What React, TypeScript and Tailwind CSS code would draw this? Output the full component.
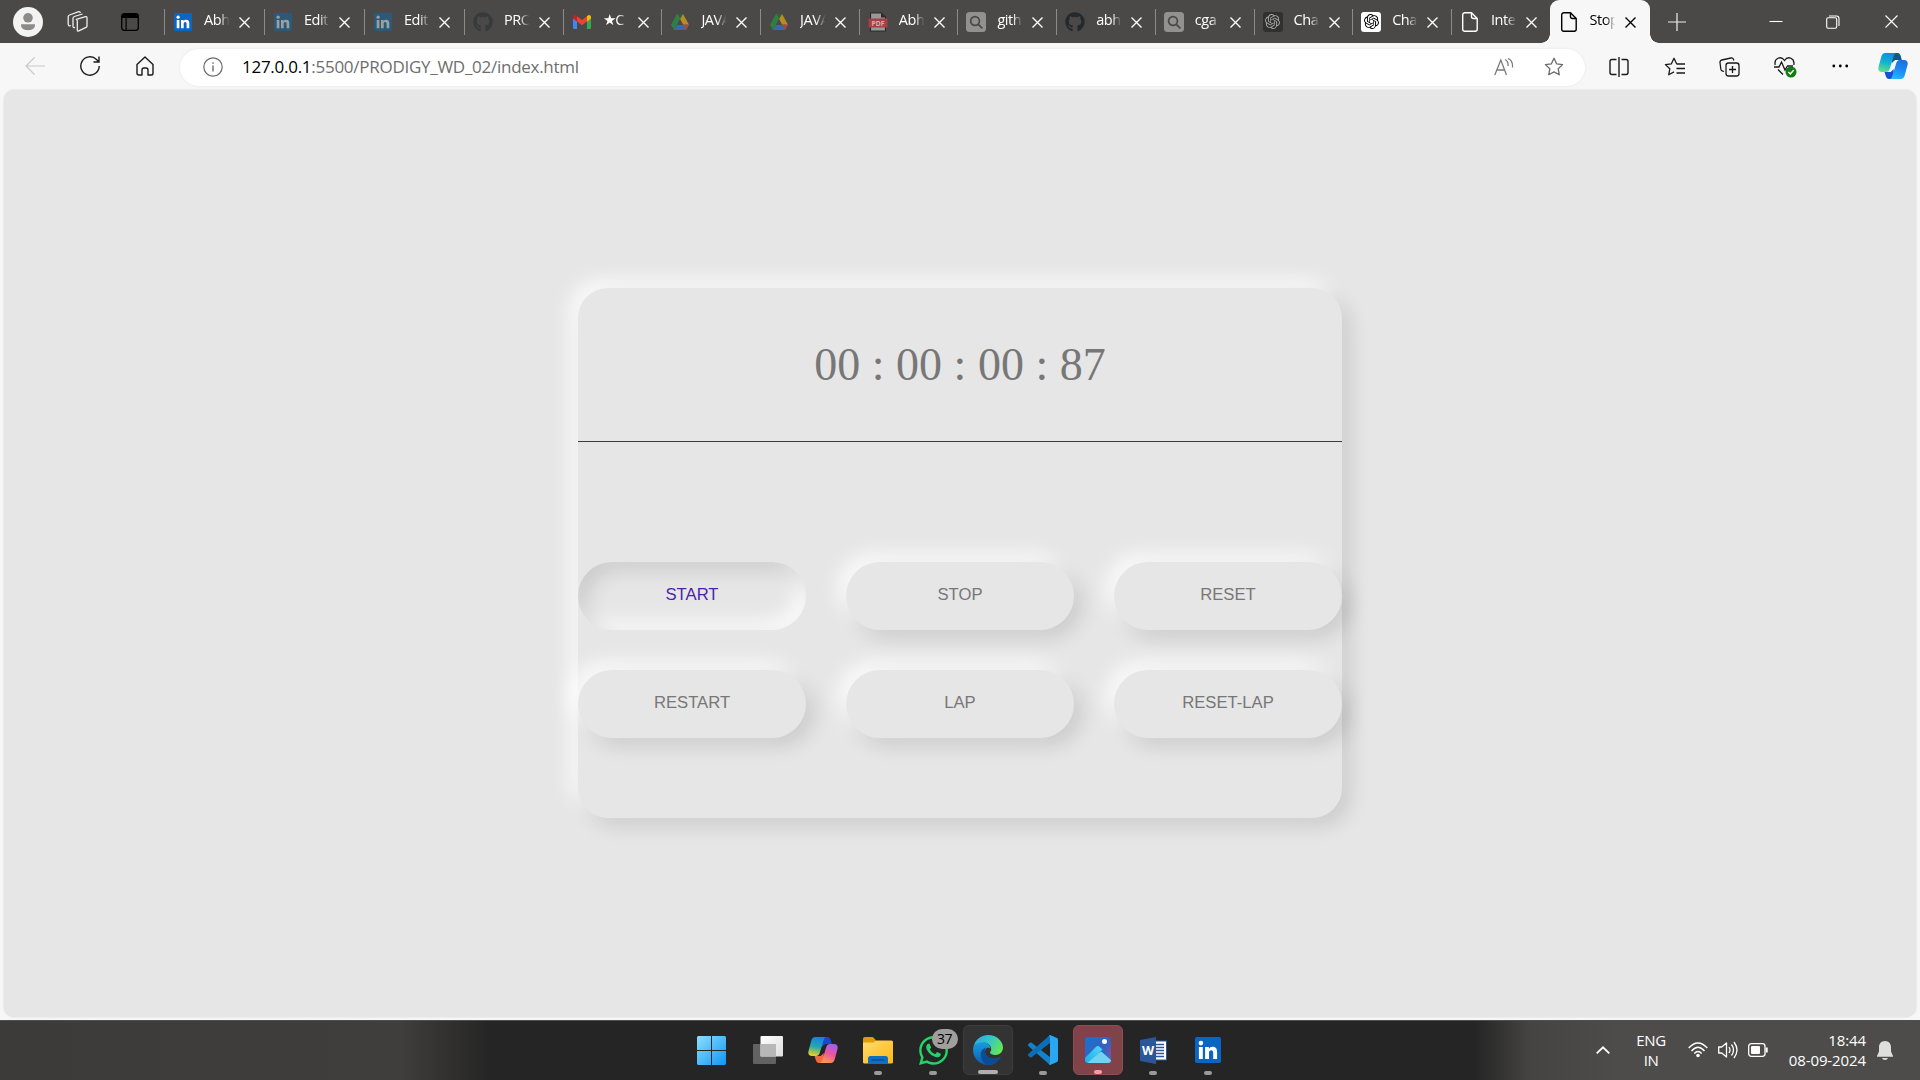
import React from "react";
import { FaGithub, FaWhatsapp } from "react-icons/fa";
import { SiOpenai } from "react-icons/si";

type IconProps = { className?: string };

const LinkedIn = ({ className, dim }: IconProps & { dim?: boolean }) => (
  <svg viewBox="0 0 18 18" className={className}>
    <rect width="18" height="18" rx="1.2" fill={dim ? "#2b5a78" : "#0a66c2"} />
    <g fill={dim ? "#9c9fa1" : "#fff"}>
      <circle cx="4.1" cy="4.2" r="1.6" />
      <path d="M2.7 7h2.7v8.2H2.7zM7 7h2.6v1.2C10.1 7.3 11 6.8 12.200 6.800c2.500 0 3.100 1.600 3.100 3.900v4.500h-2.700v-4c0-1.100-.1-2.100-1.400-2.100s-1.500 1-1.500 2.100v4H7z" />
    </g>
  </svg>
);

const Gmail = () => (
  <svg viewBox="0 0 18 14" className="h-[14px] w-[18px]">
    <path d="M0 3v9.500Q0 14 1.300 14H4V6z" fill="#4285f4" />
    <path d="M18 3v9.500Q18 14 16.700 14H14V6z" fill="#34a853" />
    <path d="M4 1.200 9 5l5-3.800v5.300L9 10.300 4 6.500z" fill="#ea4335" />
    <path d="M0 2C0 .2 2.200-.6 3.500.7L4 1.200v5.300L0 3.500z" fill="#c5221f" />
    <path d="M18 2c0-1.800-2.200-2.600-3.500-1.300l-.5.500v5.300l4-3z" fill="#fbbc04" />
  </svg>
);

const Drive = () => (
  <svg viewBox="0 0 18 16" className="h-[16px] w-[18px]">
    <path d="M6 0h6L9 5.300 3 16 0 10.700z" fill="#2f7f45" />
    <path d="M6 0h6l6 10.700h-6z" fill="#b98c22" />
    <path d="M6 0h6L9 5.300z" fill="#27653a" />
    <path d="M6 10.700h12L15 16H3z" fill="#3d66ab" />
    <path d="M12 10.700h6L15 16z" fill="#b0453b" />
    <path d="M9 5.300 12 10.700H6z" fill="#4a4947" />
  </svg>
);

const Pdf = () => (
  <svg viewBox="0 0 20 20" className="size-5">
    <path d="M2.500 1h11L17.500 5v14h-15z" fill="#999" stroke="#2b2b2b" strokeWidth="1.200" />
    <path d="M13 1v4.500h4.500z" fill="#2b2b2b" />
    <rect x="0.500" y="6.500" width="19" height="9" fill="#a93f41" />
    <text x="10" y="13.600" textAnchor="middle" fontSize="6.800" fontWeight="700" fill="#c9b5b5" fontFamily="Open Sans, sans-serif">PDF</text>
  </svg>
);

const SearchTile = () => (
  <svg viewBox="0 0 20 20" className="size-5">
    <rect width="20" height="20" rx="3.500" fill="#92918f" />
    <circle cx="9" cy="9" r="4.400" fill="none" stroke="#4a4947" strokeWidth="1.700" />
    <path d="m12.300 12.300 3.500 3.500" stroke="#4a4947" strokeWidth="1.800" strokeLinecap="round" />
  </svg>
);

const Chat = ({ dark }: { dark?: boolean }) => (
  <span className={dark ? "flex size-5 items-center justify-center rounded-[3px] bg-[#30302f] text-[#a5a5a4]" : "flex size-5 items-center justify-center rounded-[3px] bg-white text-black"}>
    <SiOpenai className="size-[15px]" />
  </span>
);

const FileIcon = () => (
  <svg viewBox="0 0 16 20" className="h-5 w-4" fill="none" stroke="currentColor" strokeWidth="1.400" strokeLinejoin="round">
    <path d="M2.700.8H9.500L15.200 6.500v10.800a2 2 0 0 1-2 2H2.700a2 2 0 0 1-2-2V2.800a2 2 0 0 1 2-2z" />
    <path d="M9.500.8v3.700a2 2 0 0 0 2 2h3.700" />
  </svg>
);

const Close = ({ className = "size-[11px]" }: IconProps) => (
  <svg viewBox="0 0 11 11" className={className} stroke="currentColor" strokeWidth="1.400">
    <path d="m.5.5 10 10M10.500.5l-10 10" />
  </svg>
);

const tabs: { title: string; icon: React.ReactNode; wide?: boolean }[] = [
  { title: "Abh", icon: <LinkedIn className="size-[18px]" />, wide: true },
  { title: "Edit", icon: <LinkedIn dim className="size-[18px]" />, wide: true },
  { title: "Edit", icon: <LinkedIn dim className="size-[18px]" />, wide: true },
  { title: "PRO", icon: <FaGithub className="size-5 text-[#363a3d]" /> },
  { title: "★C", icon: <Gmail /> },
  { title: "JAVA", icon: <Drive /> },
  { title: "JAVA", icon: <Drive /> },
  { title: "Abh", icon: <Pdf /> },
  { title: "gith", icon: <SearchTile /> },
  { title: "abh", icon: <FaGithub className="size-5 text-[#24292e]" /> },
  { title: "cga", icon: <SearchTile /> },
  { title: "Cha", icon: <Chat dark /> },
  { title: "Cha", icon: <Chat /> },
  { title: "Inte", icon: <FileIcon /> },
];

const TabBody = ({ title, icon }: { title: string; icon: React.ReactNode }) => (
  <>
    <span className="flex w-5 shrink-0 justify-center">{icon}</span>
    <span className="ml-[11px] w-[26px] shrink-0 overflow-hidden whitespace-nowrap pb-[3px] text-[14.500px] leading-5 tracking-[-0.450px] [mask-image:linear-gradient(to_right,black_60%,transparent_98%)]">
      {title}
    </span>
    <Close className="ml-[9px] mt-px size-[11px] shrink-0" />
  </>
);

const TabBar = () => (
  <header className="flex h-[43px] bg-[#4a4947] text-white">
    <div className="flex w-[164px] shrink-0 items-center">
      <svg viewBox="0 0 30 30" className="ml-[13px] size-[30px]">
        <circle cx="15" cy="15" r="15" fill="#f3f3f3" />
        <circle cx="15" cy="10.800" r="4.800" fill="#8c8b8a" />
        <path d="M8 17.300h14v.8c0 3.500-3.200 5.200-7 5.200s-7-1.700-7-5.200z" fill="#8c8b8a" />
      </svg>
      <svg viewBox="0 0 21 21" className="ml-[24px] size-[21px]" fill="none" stroke="#eee" strokeWidth="1.300" strokeLinejoin="round">
        <path d="M9.300 8.300 18.500 5.700q1.500-.3 1.500 1.200v8q0 1-1 1.500l-7.200 3.500q-1.500.5-1.500-1V10q0-1.300-1-1.700z" />
        <path d="M8 16.500q-2 .5-2-1.200V7.500q0-1.500 1.300-2L15.500 3" />
        <path d="M4 14.500q-2.800 1-2.800-1.500V6q0-1.500 1.300-2L11 .8q1.500-.5 2.500 1" />
      </svg>
      <svg viewBox="0 0 18 18" className="ml-[33px] size-[18px]">
        <rect x=".7" y=".7" width="16.600" height="16.600" rx="2.500" fill="none" stroke="#000" strokeWidth="1.300" />
        <path d="M.7 5V3Q.7.700 3 .7h12Q17.300.700 17.300 3v2zM4.500 5h1.200v12H4.500z" />
      </svg>
    </div>
    {tabs.map((t, i) => (
      <div key={i} className={t.wide ? "flex h-[43px] w-[100px] shrink-0 items-center" : "flex h-[43px] w-[98.700px] shrink-0 items-center"}>
        <span className="mr-[8px] h-[26px] w-px shrink-0 bg-[#8c8b8a]" />
        <TabBody title={t.title} icon={t.icon} />
      </div>
    ))}
    <div className="relative flex h-[43px] w-[100px] shrink-0 items-center rounded-t-[9px] bg-[#f7f7f7] pl-[9px] text-black">
      <span className="absolute bottom-0 left-[-9px] size-[9px] bg-[radial-gradient(circle_at_0_0,#4a4947_8.500px,#f7f7f7_9px)]" />
      <TabBody title="Stop" icon={<FileIcon />} />
      <span className="absolute bottom-0 right-[-9px] size-[9px] bg-[radial-gradient(circle_at_100%_0,#4a4947_8.500px,#f7f7f7_9px)]" />
    </div>
    <div className="flex flex-1 items-center">
      <svg viewBox="0 0 18 18" className="ml-[18px] size-[18px]" stroke="#eee" strokeWidth="1.200"><path d="M9 0v18M0 9h18" /></svg>
      <svg viewBox="0 0 14 14" className="ml-[83px] mt-px size-[14px]" stroke="#fff" strokeWidth="1.100"><path d="M.5 6.500h13" /></svg>
      <svg viewBox="0 0 14 14" className="ml-[43px] size-[14px]" fill="none" stroke="#fff" strokeWidth="1.100">
        <rect x=".7" y="2.700" width="10" height="10.500" rx="1.500" /><path d="M3 1h7.500q2.500 0 2.500 2.500V11" />
      </svg>
      <svg viewBox="0 0 13 13" className="ml-[45px] size-[13px]" stroke="#fff" strokeWidth="1.100"><path d="m.5.5 12 12M12.500.5l-12 12" /></svg>
    </div>
  </header>
);

const Copilot = ({ vivid, className }: { vivid?: boolean; className?: string }) => {
  const id = vivid ? "cv" : "cb";
  return (
    <svg viewBox="0 0 30 28" className={className}>
      <defs>
        <linearGradient id={id + "1"} x1="0.500" y1="0" x2="0.300" y2="1">
          <stop offset="0" stopColor={vivid ? "#1a7fe0" : "#0b8fe0"} />
          <stop offset=".5" stopColor={vivid ? "#20a8b0" : "#12b5cf"} />
          <stop offset="1" stopColor={vivid ? "#f2d21c" : "#63e08c"} />
        </linearGradient>
        <linearGradient id={id + "2"} x1="0.700" y1="0" x2="0.300" y2="1">
          <stop offset="0" stopColor={vivid ? "#a25bf0" : "#1b6fdc"} />
          <stop offset=".5" stopColor={vivid ? "#f0569a" : "#1a8cf5"} />
          <stop offset="1" stopColor={vivid ? "#ff9a4a" : "#2cb5ff"} />
        </linearGradient>
      </defs>
      <path d="M13 1h6.500c2 0 2.800 1.500 3.300 3.200l1 3.800h-6l-4 3z" fill={vivid ? "#1b48c8" : "#10578a"} />
      <path d="M16.500 27H11c-2 0-2.800-1.500-3.300-3.200L6.500 20h6l3-3z" fill={vivid ? "#f4693c" : "#1550d6"} />
      <path d="M7.500 1h11c-1.500 0-2.300 1.200-2.800 3l-4 13c-.6 2-1.700 3-3.700 3H4c-3 0-4.200-2-3.500-5l2.700-10C3.800 2.500 5.200 1 7.500 1z" fill={`url(#${id}1)`} />
      <path d="M22.500 27h-11c1.500 0 2.300-1.200 2.800-3l4-13c.6-2 1.700-3 3.700-3h4c3 0 4.200 2 3.500 5l-2.700 10c-.6 2.500-2 4-4.300 4z" fill={`url(#${id}2)`} />
      <path d="M18.800 8q-3.300.3-4.300 3.500l-1.800 5.700q-.8 2.600-1.800 2.800 3.300-.2 4.300-3.300l1.900-5.900Q17.800 8.500 18.800 8z" fill={vivid ? "#252525" : "#fff"} />
    </svg>
  );
};

const star = "M10 1.300l2.600 5.500 6 .8-4.400 4.200 1.100 6L10 14.900l-5.300 2.900 1.100-6L1.400 7.600l6-.8z";

const AddressBar = () => (
  <div className="flex h-[46px] items-center bg-[#f7f7f7]">
    <svg viewBox="0 0 20 18" className="ml-[25px] h-[18px] w-5" fill="none" stroke="#c9c9c9" strokeWidth="1.200"><path d="M20 9H1M9.500.5 1 9l8.500 8.500" /></svg>
    <svg viewBox="0 0 20 20" className="ml-[35px] size-5" fill="none" stroke="#1a1a1a" strokeWidth="1.400"><path d="M19.200 10A9.200 9.200 0 1 1 16.500 3.500L19 6M19 .5V6h-5.500" /></svg>
    <svg viewBox="0 0 18 20" className="ml-[36px] h-5 w-[18px]" fill="none" stroke="#1a1a1a" strokeWidth="1.400" strokeLinejoin="round"><path d="M1 8.500 9 1l8 7.500v8.700q0 1.800-1.800 1.800H12v-5q0-2-2-2H8q-2 0-2 2v5H2.800Q1 19 1 17.200z" /></svg>
    <div className="ml-[26px] mt-[2px] flex h-[37px] w-[1405px] items-center rounded-full bg-white shadow-[0_0_3px_rgba(0,0,0,0.080)]">
      <svg viewBox="0 0 20 20" className="ml-[23px] size-5" fill="none" stroke="#6b6b6b" strokeWidth="1.200"><circle cx="10" cy="10" r="9.200" /><path d="M10 8.500V14.500M10 5.300v1.500" strokeWidth="1.400" /></svg>
      <p className="ml-[19px] flex-1 whitespace-nowrap text-[17px] tracking-[-0.270px] text-[#6e6e6e]"><span className="text-black">127.0.0.1</span>:5500/PRODIGY_WD_02/index.html</p>
      <svg viewBox="0 0 20 18" className="h-[18px] w-5" fill="none" stroke="#7a7a7a" strokeWidth="1.300"><path d="M.8 17 6.800 2 12.500 17M2.800 12h8M11 1.500q3.500 1.500 3 6.500M14 .5q5 2 4.500 9" /></svg>
      <svg viewBox="0 0 20 20" className="ml-[30px] mr-[21px] size-5" fill="none" stroke="#6b6b6b" strokeWidth="1.300" strokeLinejoin="round"><path d={star} /></svg>
    </div>
    <svg viewBox="0 0 20 20" className="ml-[24px] mt-px size-5" fill="none" stroke="#1a1a1a" strokeWidth="1.400"><path d="M7.500 2.500H3Q1 2.500 1 4.500v11q0 2 2 2h4.500M12.500 2.500H17q2 0 2 2v11q0 2-2 2h-4.500M10 0v20" /></svg>
    <svg viewBox="0 0 21 20" className="ml-[35px] mt-[2px] h-5 w-[21px]" fill="none" stroke="#1a1a1a" strokeWidth="1.300" strokeLinejoin="round"><path d="M10 14.900 4.700 17.800l1.100-6L1.400 7.600l6-.8L10 1.300l2.600 5.500M12.500 7H21M12.500 11.500H21M12.500 16H21" /></svg>
    <svg viewBox="0 0 21 20" className="ml-[34px] mt-[2px] h-5 w-[21px]" fill="none" stroke="#1a1a1a" strokeWidth="1.300"><rect x="7" y="6" width="13" height="13" rx="2.500" /><path d="M13.500 9v7M10 12.500h7M5 14.500 3 13.800Q2 13.500 1.800 12L1 5.500Q.8 3.500 2.800 3L12 1q2-.3 2.500 1.500l.3 1" /></svg>
    <svg viewBox="0 0 23 21" className="ml-[34px] mt-[3px] h-[21px] w-[23px]" fill="none" stroke="#1a1a1a" strokeWidth="1.300"><path d="M1.200 8C-.2 1 7-1.500 10.500 3.500 14-1.500 21 1 19.800 8M0 10h5l2.500-5 3.500 8 2.500-4H19M4 12.500l5 5" /><circle cx="17" cy="15" r="5.500" fill="#107c10" stroke="none" /><path d="m14.300 15 2 2 3.500-4" stroke="#fff" strokeWidth="1.500" /></svg>
    <svg viewBox="0 0 16 4" className="ml-[35px] h-1 w-4"><circle cx="1.800" cy="2" r="1.400" /><circle cx="8.300" cy="2" r="1.400" /><circle cx="14.700" cy="2" r="1.400" /></svg>
    <Copilot className="ml-[30px] h-[28px] w-[30px]" />
  </div>
);

const raised = "shadow-[8px_8px_20px_rgba(0,0,0,0.120),-8px_-8px_20px_rgba(255,255,255,0.850)]";
const buttons = ["START", "STOP", "RESET", "RESTART", "LAP", "RESET-LAP"];

const Stopwatch = () => (
  <main className="flex h-[931px] flex-col bg-[#f7f7f7] px-1 pb-[3px] pt-px">
    <div className="flex flex-1 items-start justify-center rounded-[10px] bg-[#e6e6e6] pt-[198px] shadow-[0_0_2px_rgba(0,0,0,0.150)]">
      <section className={"h-[530px] w-[764px] rounded-[30px] bg-[#e6e6e6] " + raised}>
        <div className="flex h-[153px] justify-center pt-[50px] font-['Liberation_Serif',serif] text-[46px] leading-[53px] text-[#777]">00 : 00 : 00 : 87</div>
        <div className="h-px bg-[#3c3c3c]" />
        <div className="mt-[120px] grid grid-cols-3 gap-10">
          {buttons.map((b, i) => (
            <button key={b} className={i === 0
              ? "h-[68px] rounded-full bg-[#e6e6e6] pb-[2px] font-['Liberation_Sans',sans-serif] text-[16.670px] leading-5 text-[#4d1fae] shadow-[inset_8px_8px_20px_rgba(0,0,0,0.120),inset_-8px_-8px_20px_rgba(255,255,255,0.850)]"
              : "h-[68px] rounded-full bg-[#e6e6e6] pb-[2px] font-['Liberation_Sans',sans-serif] text-[16.670px] leading-5 text-[#777] " + raised}>
              {b}
            </button>
          ))}
        </div>
      </section>
    </div>
  </main>
);

const Windows = () => (
  <svg viewBox="0 0 29 29" className="size-[29px]">
    <defs><linearGradient id="win" gradientUnits="userSpaceOnUse" x1="0" y1="0" x2="29" y2="29"><stop stopColor="#8ae0fd" /><stop offset="1" stopColor="#1195f5" /></linearGradient></defs>
    <path d="M1 0h13v14H0V1zM15 0h13l1 1v13H15zM0 15h14v14H1l-1-1zM15 15h14v13l-1 1H15z" fill="url(#win)" />
  </svg>
);
const TaskView = () => (
  <svg viewBox="0 0 30 28" className="h-[28px] w-[30px]">
    <defs><linearGradient id="tv" x1="0" y1="0" x2="1" y2="1"><stop stopColor="#fff" /><stop offset="1" stopColor="#ddd" /></linearGradient></defs>
    <rect x="0" y="8" width="23" height="20" rx="1" fill="#626262" />
    <rect x="7.500" y="0" width="22.500" height="20.500" rx="1" fill="url(#tv)" />
    <path d="M7.500 8H23v12.500H7.500z" fill="#b7b7b7" />
  </svg>
);
const Folder = () => (
  <svg viewBox="0 0 30 27" className="h-[27px] w-[30px]">
    <defs><linearGradient id="fo" x1="0" y1="0" x2="1" y2="1"><stop stopColor="#ffdb70" /><stop offset="1" stopColor="#fdb913" /></linearGradient></defs>
    <path d="M0 2Q0 0 2 0h7q1 0 2 1l2 2.500V8H0z" fill="#dd9c08" />
    <path d="M0 5.500h10.500L13 3.500h15.500Q30 3.500 30 5v20q0 1.500-1.500 1.500h-27Q0 26.500 0 25z" fill="url(#fo)" />
    <path d="M5 27v-5.500q0-2.500 2.500-2.500h15q2.500 0 2.500 2.500V27z" fill="#0f6fc5" />
    <path d="M9 23h12" stroke="#0a3f7d" strokeWidth="1.200" strokeLinecap="round" />
  </svg>
);
const Edge = () => (
  <svg viewBox="0 0 30 30" className="size-[30px]">
    <defs>
      <linearGradient id="e1" x1="0" y1="0.200" x2="1" y2="0.600"><stop stopColor="#2aa9e6" /><stop offset=".5" stopColor="#34c6c8" /><stop offset="1" stopColor="#66e84f" /></linearGradient>
      <linearGradient id="e2" x1="0.500" y1="0" x2="0.500" y2="1"><stop stopColor="#1b9de2" /><stop offset="1" stopColor="#0b5cab" /></linearGradient>
    </defs>
    <path d="M.2 13C2 8 6 6 10 7c4 .5 7 3 7.500 6.500-3-2-6 0-5.500 4 .8 5.500 8 8.500 15.500 4.500C25 27 20.500 30 15 30 6.500 30-1 23 .2 13z" fill="url(#e2)" />
    <path d="M.2 13C1.500 5 8 0 15 0c9 0 15 6.500 15 12.500 0 4.500-3.500 7.500-7.500 7.500-3 0-5.500-1.200-5.500-2.500 0-.8 1.200-1.200 1.200-3.200C18.200 10 14 7.300 9.500 7.300 5 7.300 1.500 9.500.2 13z" fill="url(#e1)" />
    <path d="M12.800 12.500C9.500 13.500 7.500 17 7.800 20.500 8.300 25.500 11 29 15 30c5 0 9.500-2.500 12.700-7.200.3-.5-.2-.9-.7-.6-5 2.500-12 1.300-14.500-3.200-1.200-2.300-1-4.800.3-6.500z" fill="#0c4c94" />
  </svg>
);
const VsCode = () => (
  <svg viewBox="0 0 30 30" className="size-[30px]">
    <path d="M0 9.500 2 7.800q.8-.5 1.600 0L22 22v8L.3 11z" fill="#1481c8" />
    <path d="M0 20.500 2 22.200q.8.500 1.600 0L22 8V0L.3 19z" fill="#0b6fb5" />
    <path d="M22 0l7 3q1 .5 1 1.700v20.600q0 1.200-1 1.700l-7 3-1.500-1.200q1.500.3 1.500-1.500V2.700q0-1.800-1.500-1.500z" fill="#2aa7f2" />
  </svg>
);
const Photos = () => (
  <svg viewBox="0 0 26 26" className="size-[26px]">
    <defs>
      <linearGradient id="p1" x1="0" y1="0" x2="1" y2="1"><stop stopColor="#1673d2" /><stop offset=".55" stopColor="#3462bd" /><stop offset="1" stopColor="#8b4fae" /></linearGradient>
      <linearGradient id="p2" x1="1" y1="0" x2="0" y2="1"><stop stopColor="#52d8fa" /><stop offset="1" stopColor="#1badea" /></linearGradient>
    </defs>
    <rect width="26" height="26" rx="3" fill="url(#p1)" />
    <path d="m16.600 12.200 9.400 9.800v1q0 3-3 3H1l12-13z" fill="#1672cc" />
    <path d="M0 21 10.800 10q2-1.800 4 0l2.700 2.600L3.500 26H3q-3 0-3-3z" fill="url(#p2)" />
    <path d="M2.500 26 14.500 15.500q1.500-1.300 3 0L26 23q0 3-3 3z" fill="#7ddcf8" opacity=".9" />
    <circle cx="19.500" cy="4.500" r="2.500" fill="#fff" />
  </svg>
);
const Word = () => (
  <svg viewBox="0 0 27 27" className="size-[27px]">
    <rect x="14" y="4" width="12.500" height="19" fill="#fff" stroke="#2b579a" />
    <path d="M16 7.500h8M16 10.500h8M16 13.500h8M16 16.500h8M16 19.500h8" stroke="#2b579a" strokeWidth="1.300" />
    <path d="M0 3 16 0v27L0 24z" fill="#2b579a" />
    <text x="8" y="18" textAnchor="middle" fontSize="12.500" fontWeight="700" fill="#fff" fontFamily="Open Sans, sans-serif">W</text>
  </svg>
);

const apps: { icon: React.ReactNode; mark?: string; tile?: string }[] = [
  { icon: <TaskView /> },
  { icon: <Copilot vivid className="h-[28px] w-[30px]" /> },
  { icon: <Folder />, mark: "w-2 bg-[#9a9a9a]" },
  { icon: (
      <span className="relative flex">
        <FaWhatsapp className="size-[33px] text-[#25d366]" />
        <span className="absolute left-[15px] top-[-5px] flex h-5 w-[26px] items-center justify-center rounded-full bg-[#a09f9d] text-[14px] tracking-[-0.500px] text-black">37</span>
      </span>
    ), mark: "w-2 bg-[#9a9a9a]" },
  { icon: <Edge />, mark: "w-5 bg-[#b0afad]", tile: "bg-[#333] border border-[#3d3d3d]" },
  { icon: <VsCode />, mark: "w-2 bg-[#9a9a9a]" },
  { icon: <Photos />, mark: "w-2 bg-[#ff9aa5]", tile: "bg-[#814349] border border-[#8c4f55]" },
  { icon: <Word />, mark: "w-2 bg-[#9a9a9a]" },
  { icon: <LinkedIn className="size-[26px]" />, mark: "w-2 bg-[#9a9a9a]" },
];

const Taskbar = () => (
  <footer className="flex h-[60px] items-center border-t border-[#4f4f4f] bg-[linear-gradient(to_right,#3d3b39_0,#403e3c_400px,#252525_490px,#252525_1475px,#454442_1530px,#4d4c4a_1620px)] pb-px text-white">
    <div className="ml-[697px] flex w-[46px] shrink-0"><Windows /></div>
    <div className="flex gap-[5px]">
      {apps.map((a, i) => (
        <div key={i} className={"relative flex h-[50px] w-[50px] items-center justify-center rounded-[6px] " + (a.tile ?? "")}>
          {a.icon}
          {a.mark && <span className={"absolute bottom-0 h-1 rounded-full " + a.mark} />}
        </div>
      ))}
    </div>
    <div className="ml-auto flex items-center">
      <svg viewBox="0 0 14 8" className="h-2 w-[14px]" fill="none" stroke="#fff" strokeWidth="1.800"><path d="m.7 7.300 6.300-6 6.300 6" /></svg>
      <p className="ml-[24px] w-[34px] pb-px text-center text-[15px] leading-5 tracking-[-0.400px]">ENG<br />IN</p>
      <svg viewBox="0 0 20 16" className="ml-[20px] h-4 w-5" fill="none" stroke="#fff" strokeWidth="1.400"><path d="M.7 6Q10-4 19.300 6M3.500 9Q10 1.500 16.500 9M6.300 11.500Q10 7.500 13.700 11.500" /><circle cx="10" cy="13.500" r="1.800" fill="#fff" stroke="none" /></svg>
      <svg viewBox="0 0 20 18" className="ml-[10px] h-[18px] w-5" fill="none" stroke="#fff" strokeWidth="1.300" strokeLinejoin="round"><path d="M.7 6h3L8.500 2v14l-4.800-4h-3zM11 6q2 3 0 6M13.500 3.500q4 5.500 0 11M16 1q6 8 0 16" /></svg>
      <svg viewBox="0 0 20 14" className="ml-[10px] h-[14px] w-5" fill="none" stroke="#fff" strokeWidth="1.300"><rect x=".7" y=".7" width="16.300" height="12.600" rx="2.500" /><rect x="3" y="3" width="9" height="8" rx="1" fill="#fff" stroke="none" /><path d="M18.700 4.500v5" strokeWidth="2" /></svg>
      <p className="ml-[18px] w-[80px] whitespace-nowrap pb-px text-right text-[15px] leading-5 tracking-[-0.100px]">18:44<br />08-09-2024</p>
      <svg viewBox="0 0 16 19" className="ml-[11px] mr-[27px] h-[19px] w-4 text-[#dededd]" fill="currentColor"><path d="M8 0c3.800 0 6 2.800 6 6.200v4.300l2 4.500v.8H0V15l2-4.500V6.200C2 2.800 4.200 0 8 0zM5 17h6q-.6 2-3 2t-3-2z" /></svg>
    </div>
  </footer>
);

export default function App() {
  return (
    <div className="flex h-[1080px] w-[1920px] flex-col overflow-hidden bg-[#f7f7f7] font-['Open_Sans','Noto_Sans',sans-serif]">
      <TabBar />
      <AddressBar />
      <Stopwatch />
      <Taskbar />
    </div>
  );
}
